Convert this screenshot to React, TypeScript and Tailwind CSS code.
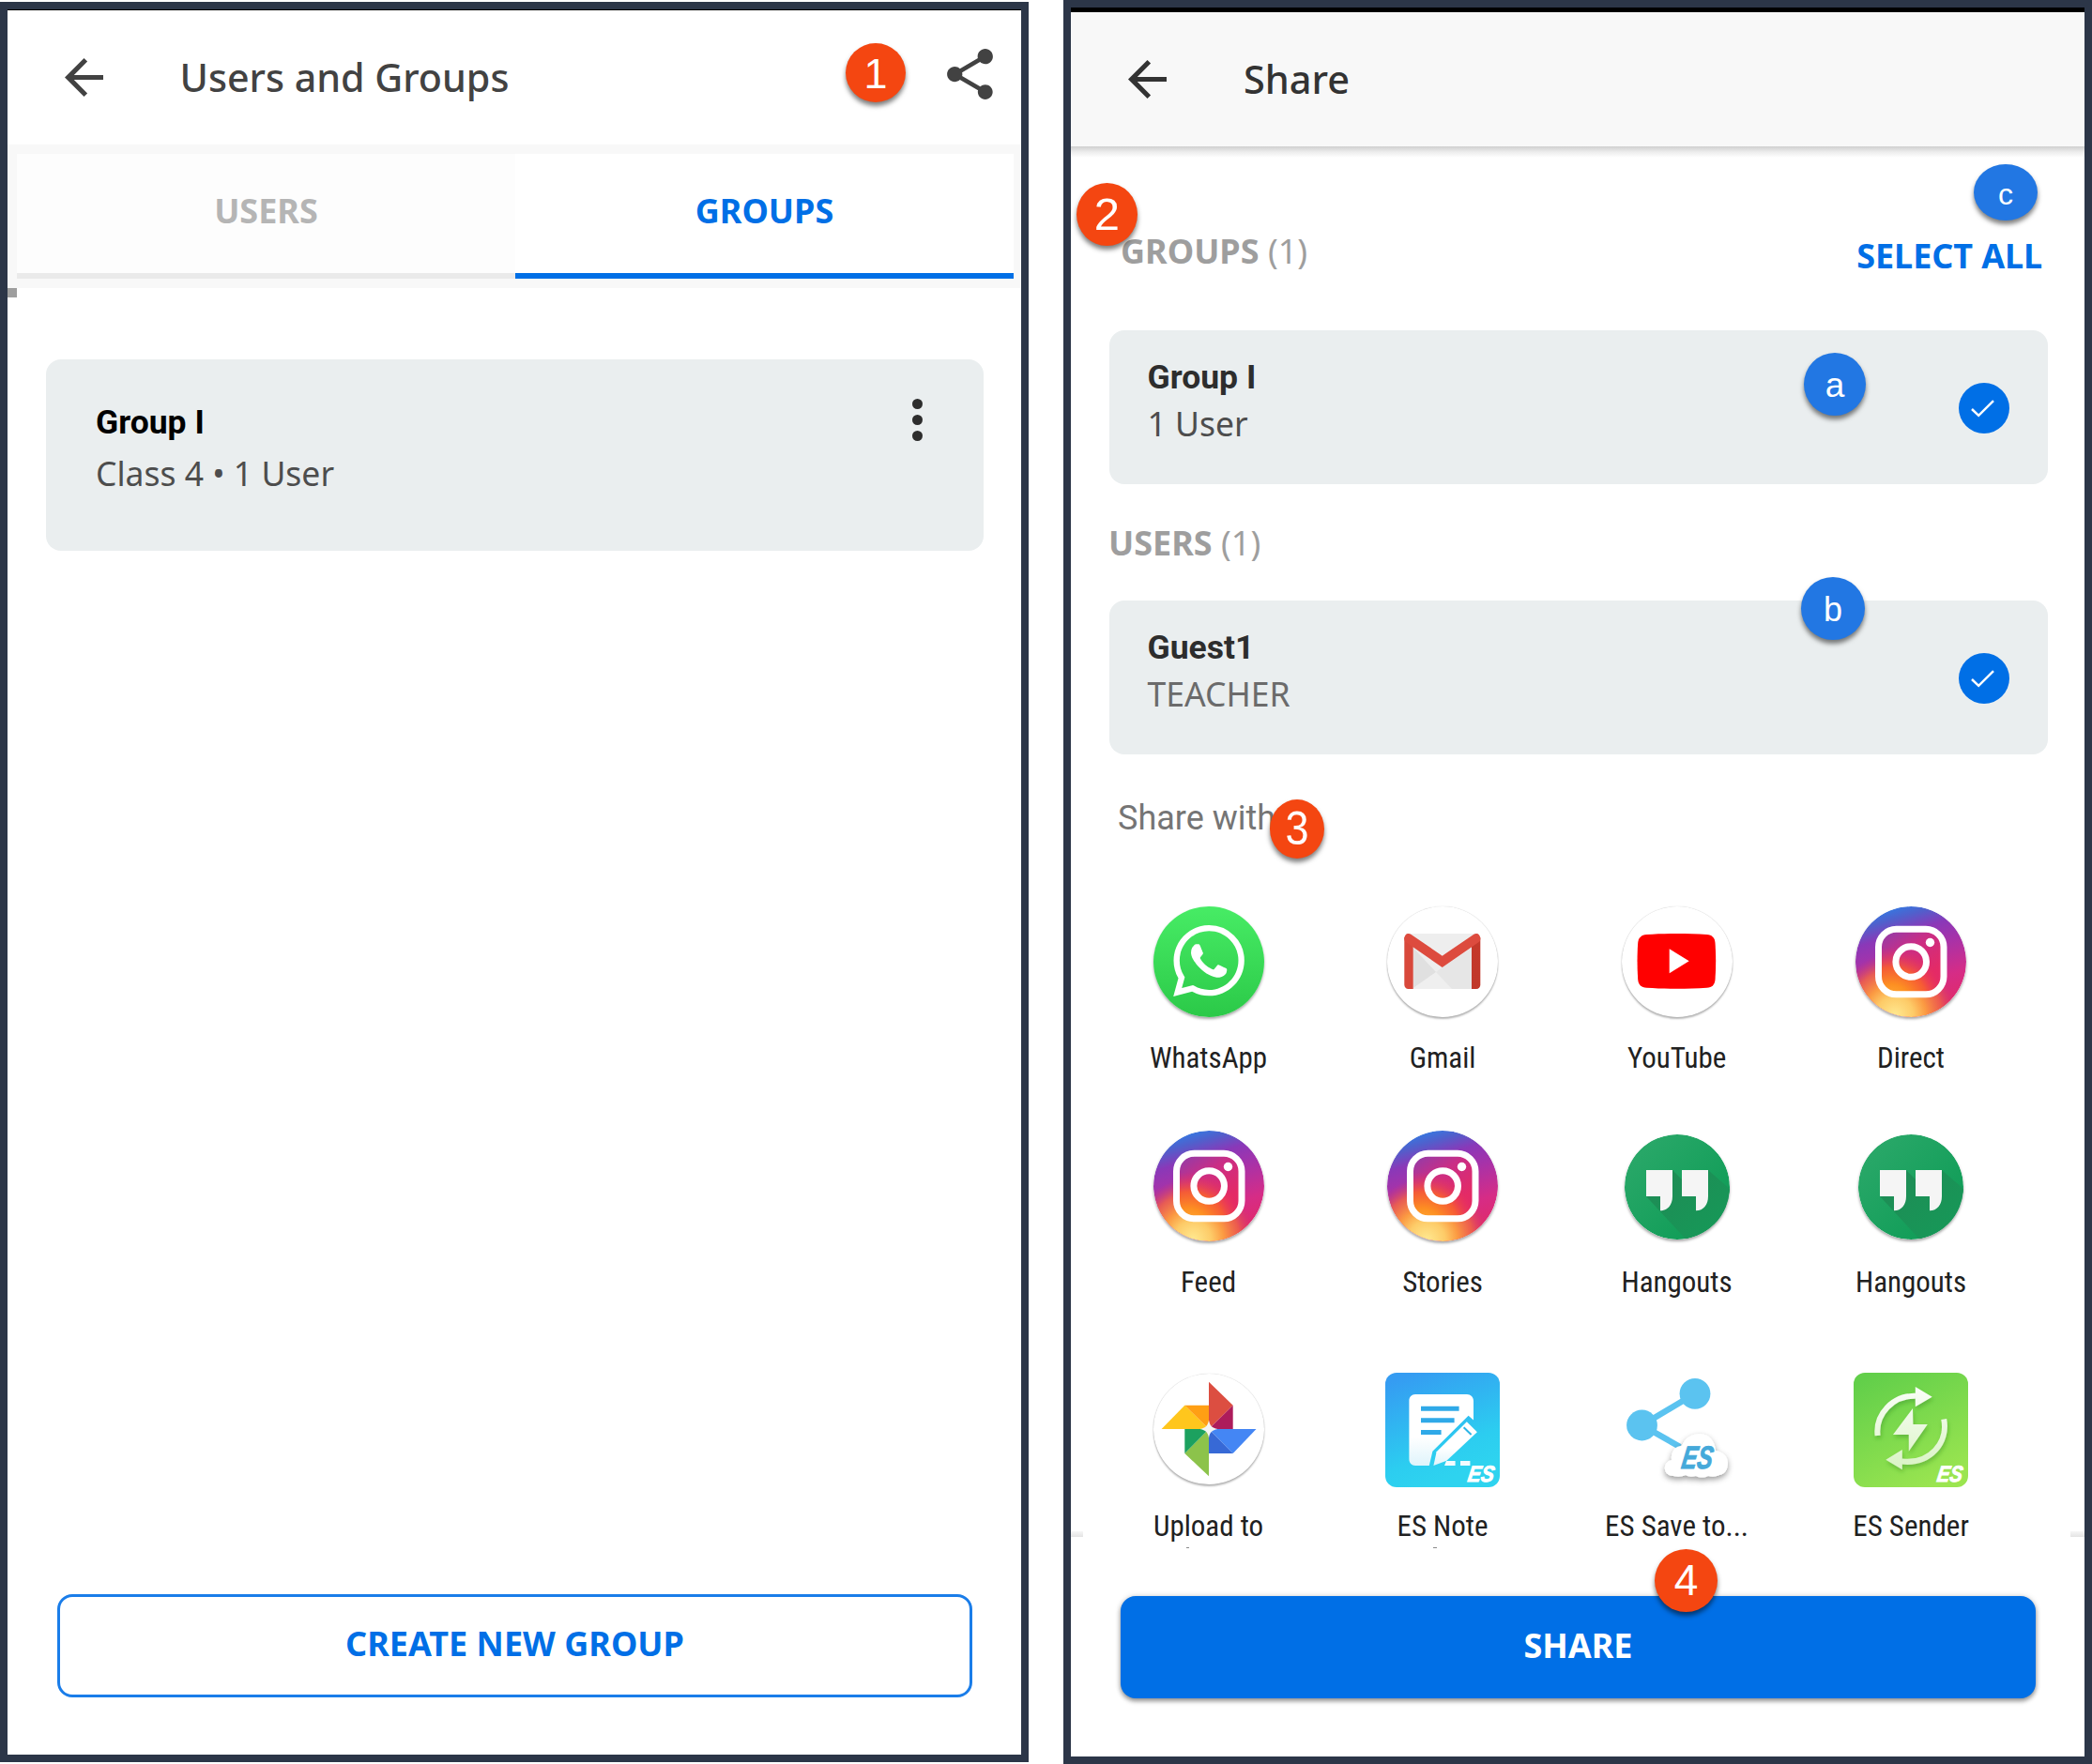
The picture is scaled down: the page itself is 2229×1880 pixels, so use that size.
import React from "react";
import { SiWhatsapp } from "react-icons/si";

const NOTO = "font-['Noto_Sans',sans-serif]";
const ROBOTO = "font-['Roboto',sans-serif]";

function BackArrow() {
  return (
    <svg className="h-[41px] w-[41px] shrink-0" viewBox="4 4 16 16" fill="currentColor">
      <path d="M20 11H7.83l5.59-5.59L12 4l-8 8 8 8 1.41-1.41L7.83 13H20v-2z" />
    </svg>
  );
}

function ShareIcon() {
  return (
    <svg className="h-[54px] w-[49px] shrink-0" viewBox="3 2 18 19.92" fill="currentColor">
      <path d="M18 16.08c-.76 0-1.44.3-1.96.77L8.91 12.7c.05-.23.09-.46.09-.7s-.04-.47-.09-.7l7.05-4.11c.54.5 1.25.81 2.04.81 1.66 0 3-1.34 3-3s-1.34-3-3-3-3 1.34-3 3c0 .24.04.47.09.7L8.04 9.81C7.5 9.31 6.79 9 6 9c-1.66 0-3 1.34-3 3s1.34 3 3 3c.79 0 1.5-.31 2.04-.81l7.12 4.16c-.05.21-.08.43-.08.65 0 1.61 1.31 2.92 2.92 2.92s2.92-1.31 2.92-2.92-1.31-2.92-2.92-2.92z" />
    </svg>
  );
}

function Badge({ className, children }: { className: string; children: React.ReactNode }) {
  return (
    <div
      className={`absolute z-10 flex items-center justify-center rounded-[50%] font-['Liberation_Sans',sans-serif] text-white shadow-[0_4px_5px_rgba(0,0,0,0.5)] ${className}`}
    >
      {children}
    </div>
  );
}

function CheckMark() {
  return (
    <svg className="mt-[2px] h-[54px] w-[54px]" viewBox="0 0 54 54">
      <circle cx="27" cy="27" r="27" fill="#006fe6" />
      <path d="M14 28l7.2 6.8L37 19.2" fill="none" stroke="#fff" strokeWidth="2.5" />
    </svg>
  );
}

const DISC = "h-[118px] w-[118px] rounded-full shadow-[0_2px_3px_rgba(0,0,0,0.35)]";
const WHITE_DISC = "h-[118px] w-[118px] rounded-full bg-white shadow-[0_2px_2px_rgba(0,0,0,0.28),0_0_1px_rgba(0,0,0,0.25)]";

function WhatsAppIcon() {
  return (
    <div className={`${DISC} flex items-center justify-center bg-linear-to-b from-[#47ec65] to-[#2bc948]`}>
      <SiWhatsapp className="mb-[2px] h-[76px] w-[76px] text-white" />
    </div>
  );
}

function GmailIcon() {
  return (
    <svg className={WHITE_DISC} viewBox="0 0 118 118">
      <defs>
        <linearGradient id="gm-r" x1="0" y1="0" x2="0" y2="1">
          <stop offset="0" stopColor="#c5392b" />
          <stop offset="1" stopColor="#c0382a" />
        </linearGradient>
      </defs>
      <rect x="20" y="29" width="77" height="59" fill="#eeeeee" />
      <path d="M27.7 44L69 88H27.7z" fill="#e0e0e0" />
      <path d="M27.7 88L52 70l6.7-5L90 44v44z" fill="#e6e6e6" />
      <path d="M27.7 87L52 70l17 18H27.7z" fill="#efefef" />
      <path d="M18.3 33h9.4v55h-5a4.4 4.4 0 0 1-4.4-4.4z" fill="#d8483b" />
      <path d="M99.3 33H90v55h5a4.3 4.3 0 0 0 4.3-4.4z" fill="url(#gm-r)" />
      <path d="M18.3 34.5c0-5 4-7 7.3-4.6L58.7 52.7 92 29.9c3.4-2.4 7.3-.4 7.3 4.6 0 2-.8 3-2.3 4L58.7 65 20.6 38.5c-1.5-1-2.3-2-2.3-4z" fill="#dd4b3e" />
    </svg>
  );
}

function YouTubeIcon() {
  return (
    <svg className={WHITE_DISC} viewBox="0 0 118 118">
      <path d="M26.500 30c20-1.400 44-1.400 64 0 6 .5 8.500 3.500 9 9 .9 13 .9 26 0 39-.5 5.500-3 8.300-9 8.800-20 1.300-44 1.300-64 0-6-.5-8.800-3.300-9.300-8.800-.9-13-.9-26 0-39 .5-5.500 3.300-8.500 9.300-9z" fill="#ff0000" />
      <path d="M50.700 45.300l21 13-21 13z" fill="#fff" />
    </svg>
  );
}

function InstagramIcon({ id }: { id: string }) {
  return (
    <svg className={DISC} viewBox="0 0 118 118">
      <defs>
        <linearGradient id={`${id}-a`} x1="0.36" y1="0" x2="0.66" y2="1">
          <stop offset="0" stopColor="#3479e2" />
          <stop offset="0.1" stopColor="#5060cc" />
          <stop offset="0.24" stopColor="#8a38b8" />
          <stop offset="0.42" stopColor="#a832a8" />
          <stop offset="0.7" stopColor="#d62c86" />
          <stop offset="1" stopColor="#e22a64" />
        </linearGradient>
        <radialGradient id={`${id}-b`} gradientUnits="userSpaceOnUse" cx="42" cy="116" r="66">
          <stop offset="0" stopColor="#ffe990" />
          <stop offset="0.3" stopColor="#fdcb68" />
          <stop offset="0.5" stopColor="#fb9a42" />
          <stop offset="0.75" stopColor="#ef6348" stopOpacity="0.85" />
          <stop offset="1" stopColor="#d0386c" stopOpacity="0" />
        </radialGradient>
        <linearGradient id={`${id}-c`} x1="0.1" y1="0" x2="0.6" y2="0.8">
          <stop offset="0" stopColor="#8d3dac" />
          <stop offset="0.45" stopColor="#c92e86" />
          <stop offset="1" stopColor="#e42a66" />
        </linearGradient>
        <radialGradient id={`${id}-d`} gradientUnits="userSpaceOnUse" cx="38" cy="104" r="60">
          <stop offset="0" stopColor="#ffb63e" />
          <stop offset="0.35" stopColor="#fd8f22" />
          <stop offset="0.65" stopColor="#f8602f" stopOpacity="0.9" />
          <stop offset="1" stopColor="#e42a66" stopOpacity="0" />
        </radialGradient>
      </defs>
      <circle cx="59" cy="59" r="59" fill={`url(#${id}-a)`} />
      <circle cx="59" cy="59" r="59" fill={`url(#${id}-b)`} />
      <rect x="24.5" y="24.3" width="69.5" height="69.5" rx="19" fill={`url(#${id}-c)`} />
      <rect x="24.5" y="24.3" width="69.5" height="69.5" rx="19" fill={`url(#${id}-d)`} stroke="#fff" strokeWidth="7" />
      <circle cx="59.2" cy="59" r="16.3" fill="none" stroke="#fff" strokeWidth="7" />
      <circle cx="79.5" cy="38.5" r="4.7" fill="#fff" />
    </svg>
  );
}

function HangoutsIcon({ id }: { id: string }) {
  return (
    <svg className="mt-[2px] h-[112px] w-[112px] rounded-full shadow-[0_2px_3px_rgba(0,0,0,0.35)]" viewBox="3 3 112 112">
      <defs>
        <linearGradient id={`${id}-a`} x1="0.1" y1="0.1" x2="0.8" y2="0.8">
          <stop offset="0" stopColor="#2aa869" />
          <stop offset="1" stopColor="#119d58" />
        </linearGradient>
        <linearGradient id={`${id}-b`} x1="0" y1="0" x2="1" y2="1">
          <stop offset="0" stopColor="#208a55" />
          <stop offset="1" stopColor="#159a58" />
        </linearGradient>
      </defs>
      <circle cx="59" cy="59" r="56" fill={`url(#${id}-a)`} />
      <path d="M26 69l42 45.5C98 108 116 88 115 61L92 41v28l-28-1V51L54 41v28z" fill={`url(#${id}-b)`} />
      <path d="M26 41h28v28c0 9-5 15.3-13 15.3V69H26zM64 41h28v28c0 9-5 15.3-13 15.3V69H64z" fill="#f5f5f5" />
    </svg>
  );
}

function PhotosIcon() {
  return (
    <svg className={`${WHITE_DISC} mb-[2px]`} viewBox="0 0 118 118">
      <path d="M59 8.7l25.7 25L59 59z" fill="#dc4e41" />
      <path d="M84.7 33.7V59H59z" fill="#ad1c5b" />
      <path d="M59 59h50.5L84.7 85z" fill="#4486f4" />
      <path d="M59 59l25.7 26H59z" fill="#3769d6" />
      <path d="M59 109.3L33.3 85 59 59z" fill="#8cc34b" />
      <path d="M33.3 59H59L33.3 85z" fill="#1ca15f" />
      <path d="M8.6 59l24.7-25.3L59 59z" fill="#ffc61d" />
      <path d="M33.3 33.7H59V59z" fill="#ff9f14" />
      <path d="M59 49.5c1.2 6 3 8 9.500 9.500-6.500 1.500-8.300 3.500-9.500 9.500-1.200-6-3-8-9.500-9.500 6.500-1.500 8.300-3.500 9.500-9.500z" fill="#f4f4f4" />
    </svg>
  );
}

function EsMark({ x, y, size, width, fill }: { x: number; y: number; size: number; width: number; fill: string }) {
  return (
    <g transform={`translate(${x} ${y}) skewX(-9)`}>
      <text
        textLength={width}
        lengthAdjust="spacingAndGlyphs"
        fill={fill}
        stroke={fill}
        strokeWidth="0.9"
        className="font-['Liberation_Sans',sans-serif] font-bold italic"
        fontSize={size}
      >
        ES
      </text>
    </g>
  );
}

function EsNoteIcon() {
  return (
    <svg className="h-[122px] w-[122px] rounded-xl" viewBox="0 0 122 122">
      <defs>
        <linearGradient id="note-a" x1="0.25" y1="0" x2="0.6" y2="0.9">
          <stop offset="0" stopColor="#359cf2" />
          <stop offset="0.75" stopColor="#2ccdf0" />
          <stop offset="1" stopColor="#2ed3ef" />
        </linearGradient>
        <linearGradient id="note-b" x1="0" y1="0" x2="0" y2="1">
          <stop offset="0.6" stopColor="#fff" />
          <stop offset="1" stopColor="#dff4fb" />
        </linearGradient>
      </defs>
      <rect width="122" height="122" fill="url(#note-a)" />
      <path d="M32 23h55c4 0 7 3 7 7v20.5l-5.4-4.8L50.4 83.7 46.8 99H32c-4 0-6.6-3-6.6-7V30c0-4 2.6-7 6.6-7z" fill="url(#note-b)" />
      <path d="M38 35.7h40.6v5H38zM38 48.3h35.6v5H38zM38 61h21.6v5H38z" fill="#2fa9e8" />
      <path d="M51.4 99l3.2-14.7 32.2-32 11.1 10.9-32.5 30.5z" fill="url(#note-b)" />
      <path d="M83.6 58.3l8 7.7" stroke="#2bb4e6" strokeWidth="2" />
      <path d="M65 94h9.6v5H63zM80 94h10.4v5H80z" fill="#f2fbfe" />
      <EsMark x={87} y={115.5} size={24} width={28} fill="#fff" />
    </svg>
  );
}

function EsSaveIcon() {
  return (
    <svg className="h-[122px] w-[122px]" viewBox="0 0 122 122">
      <defs>
        <filter id="save-s" x="-20%" y="-20%" width="140%" height="150%">
          <feDropShadow dx="0" dy="3" stdDeviation="3" floodColor="#000" floodOpacity="0.4" />
        </filter>
      </defs>
      <path d="M80 22.3L23.5 56 64 79" fill="none" stroke="#5bc3f0" strokeWidth="6.5" />
      <circle cx="80" cy="22.3" r="16.4" fill="#5bc3f0" />
      <circle cx="23.5" cy="56" r="16.4" fill="#5bc3f0" />
      <path
        d="M57 110c-7 0-10-5-9-10 1-4 3-6 7-7-1-9 4-15 11-15 3-8 10-13 20-13 10 1 15 8 16 18 7 1 13 6 13 13 0 7-3 12-9 13-4 2-8 2-12 1-4 2-9 2-13 0-4 1-8 1-11-1-4 2-9 2-13 1z"
        fill="#fff"
        filter="url(#save-s)"
      />
      <EsMark x={64.5} y={101.5} size={34} width={33} fill="#45a9da" />
    </svg>
  );
}

function EsSenderIcon() {
  return (
    <svg className="h-[122px] w-[122px] rounded-xl" viewBox="0 0 122 122">
      <defs>
        <linearGradient id="send-a" x1="0.2" y1="0" x2="0.7" y2="1">
          <stop offset="0" stopColor="#62cf4a" />
          <stop offset="1" stopColor="#9be550" />
        </linearGradient>
        <linearGradient id="send-b" gradientUnits="userSpaceOnUse" x1="0" y1="15" x2="0" y2="104">
          <stop offset="0" stopColor="#fafef8" />
          <stop offset="1" stopColor="#d9f3c4" />
        </linearGradient>
        <filter id="send-s" x="-20%" y="-20%" width="140%" height="140%">
          <feDropShadow dx="1" dy="3" stdDeviation="2" floodColor="#2c7a1c" floodOpacity="0.35" />
        </filter>
      </defs>
      <rect width="122" height="122" fill="url(#send-a)" />
      <g filter="url(#send-s)">
        <path d="M25.6 67C23 44 42 24 66 24.8M96.2 49.5C101 74 82 98 51 94.5" fill="none" stroke="url(#send-b)" strokeWidth="6" />
        <path d="M65.8 15l17.9 10.7-17.9 10.6zM51.8 82v21.3L34.3 92.7zM63 38L42 66h16.8v17.7L78.8 55H63.4z" fill="url(#send-b)" />
      </g>
      <EsMark x={88} y={115.5} size={24} width={27} fill="#fff" />
    </svg>
  );
}

const APP_ROWS: { className: string; apps: { label: string; icon: React.ReactNode }[] }[] = [
  {
    className: "mt-[72px]",
    apps: [
      { label: "WhatsApp", icon: <WhatsAppIcon /> },
      { label: "Gmail", icon: <GmailIcon /> },
      { label: "YouTube", icon: <YouTubeIcon /> },
      { label: "Direct", icon: <InstagramIcon id="direct" /> },
    ],
  },
  {
    className: "mt-[57px]",
    apps: [
      { label: "Feed", icon: <InstagramIcon id="feed" /> },
      { label: "Stories", icon: <InstagramIcon id="stories" /> },
      { label: "Hangouts", icon: <HangoutsIcon id="hang1" /> },
      { label: "Hangouts", icon: <HangoutsIcon id="hang2" /> },
    ],
  },
  {
    className: "mt-[78px]",
    apps: [
      { label: "Upload to", icon: <PhotosIcon /> },
      { label: "ES Note", icon: <EsNoteIcon /> },
      { label: "ES Save to...", icon: <EsSaveIcon /> },
      { label: "ES Sender", icon: <EsSenderIcon /> },
    ],
  },
];

function SelectCard({ title, subtitle, subtitleClass }: { title: string; subtitle: string; subtitleClass: string }) {
  return (
    <div className="mr-[39px] ml-[41px] flex h-[163.5px] shrink-0 items-center justify-between rounded-2xl bg-[#eaeeef] pr-[41px] pl-[40.5px]">
      <div className="flex h-full flex-col pt-[30px]">
        <div className={`${ROBOTO} text-[35.5px] leading-[40px] font-bold text-[#2d2d2d]`}>{title}</div>
        <div className={`${NOTO} mt-[5px] text-[35.5px] leading-[48px] ${subtitleClass}`}>{subtitle}</div>
      </div>
      <CheckMark />
    </div>
  );
}

function GroupsScreen() {
  return (
    <section className="relative mt-[2px] flex h-[1876px] w-[1096px] shrink-0 flex-col border-8 border-[#2c3648] bg-white">
      <header className="flex h-[144px] shrink-0 items-center border-t border-black pr-[30px] pl-[61px] text-[#424242]">
        <BackArrow />
        <h1 className={`${NOTO} ml-[81.5px] pb-[2px] text-[41.2px] leading-[56px] font-medium`}>Users and Groups</h1>
        <div className="mb-[8px] ml-auto">
          <ShareIcon />
        </div>
      </header>
      <nav className={`${NOTO} flex h-[153px] shrink-0 bg-[#f8f8f8] py-[10px] pr-2 pl-[10px] text-4xl font-bold`}>
        <div className="flex flex-1 items-center justify-center border-b-[6px] border-[#eaeaea] bg-[#fdfdfd] pb-[5px] text-[#b5b5b5]">
          USERS
        </div>
        <div className="flex flex-1 items-center justify-center border-b-[6px] border-[#006fe6] bg-white pb-[5px] text-[#006fe6]">
          GROUPS
        </div>
      </nav>
      <div className="h-[10px] w-[10px] shrink-0 bg-[#9e9e9e]" />
      <div className="mt-[66px] mr-[40px] ml-[41px] flex h-[204px] justify-between rounded-2xl bg-[#eaeeef] pr-[65px] pl-[53px]">
        <div className="pt-[47px]">
          <div className={`${ROBOTO} text-[35.5px] leading-[40px] font-bold text-black`}>Group I</div>
          <div className={`${NOTO} mt-[10px] text-[35.5px] leading-[48px] text-[#4d4d4d]`}>Class 4 • 1 User</div>
        </div>
        <div className="flex flex-col gap-[6px] pt-[42px]">
          <span className="h-[11px] w-[11px] rounded-full bg-[#2d2d2d]" />
          <span className="h-[11px] w-[11px] rounded-full bg-[#2d2d2d]" />
          <span className="h-[11px] w-[11px] rounded-full bg-[#2d2d2d]" />
        </div>
      </div>
      <button
        className={`${NOTO} mt-auto mr-[52px] mb-[61px] ml-[53px] flex h-[110px] shrink-0 items-center justify-center rounded-2xl border-[3px] border-[#1a7de9] pb-[4px] text-4xl font-bold text-[#006fe6]`}
      >
        CREATE NEW GROUP
      </button>
      <Badge className="top-[36px] left-[893px] h-[63px] w-[64px] bg-[#f44611] pt-[2px] text-[45px]">1</Badge>
    </section>
  );
}

function ShareScreen() {
  return (
    <section className="relative ml-[37px] flex h-[1880px] w-[1096px] shrink-0 flex-col border-8 border-[#2c3648] bg-white">
      <div className="h-[5px] shrink-0 bg-black" />
      <header className="flex h-[143px] shrink-0 items-center bg-[#f8f8f8] pl-[61px] text-[#333333]">
        <BackArrow />
        <h1 className={`${NOTO} ml-[82px] pb-[2px] text-[41.5px] leading-[56px] font-medium`}>Share</h1>
      </header>
      <div className="h-3 shrink-0 bg-linear-to-b from-[#cfcfcf] via-[#ededed] to-white" />
      <div className={`${NOTO} flex h-[184px] shrink-0 justify-between pt-[75px] pr-[45px] pl-[53px] text-4xl leading-[50px]`}>
        <div className="text-[#9e9e9e]">
          <b>GROUPS</b> (1)
        </div>
        <div className="pt-[5px] font-bold text-[#006fe6]">
          <span className="tracking-[-0.1px]">SELECT ALL</span>
        </div>
      </div>
      <SelectCard title="Group I" subtitle="1 User" subtitleClass="text-[#4d4d4d]" />
      <div className={`${NOTO} mt-[38px] mb-[36.5px] pl-[40px] text-4xl leading-[50px] text-[#9e9e9e]`}>
        <b>USERS</b> (1)
      </div>
      <SelectCard title="Guest1" subtitle="TEACHER" subtitleClass="text-[#6b6b6b]" />
      <div className={`${ROBOTO} mt-[48px] pl-[50px] text-4xl leading-[40px] text-[#757575]`}>Share with</div>
      {APP_ROWS.map((row, i) => (
        <div key={i} className={`${row.className} ml-[21.8px] grid w-[998px] grid-cols-4`}>
          {row.apps.map((app, j) => (
            <div key={j} className="flex flex-col items-center">
              <div className="flex h-[122px] items-center justify-center">{app.icon}</div>
              <div className="mt-[24px] font-['Roboto_Condensed','Roboto',sans-serif] text-[31px] leading-[36px] text-[#212121]">
                {app.label}
              </div>
            </div>
          ))}
        </div>
      ))}
      <div className="absolute top-[1624px] left-0 h-[6px] w-[13px] bg-linear-to-b from-[#f6f6f6] to-[#e4e4e4]" />
      <div className="absolute top-[1624px] right-0 h-[6px] w-[15px] bg-linear-to-b from-[#f6f6f6] to-[#e4e4e4]" />
      <div className="absolute top-[1641px] left-[123px] h-px w-[3px] bg-[#8a8a8a]" />
      <div className="absolute top-[1641px] left-[386px] h-px w-[4px] bg-[#8a8a8a]" />
      <button
        className={`${NOTO} mt-auto mr-[52px] mb-[62px] ml-[53px] flex h-[109px] shrink-0 items-center justify-center rounded-2xl bg-[#006fe6] pb-[4px] text-4xl font-bold text-white shadow-[0_3px_5px_rgba(0,0,0,0.4),0_0_6px_rgba(0,0,0,0.15)]`}
      >
        SHARE
      </button>
      <Badge className="top-[187px] left-[6px] h-[67px] w-[65px] bg-[#f44611] text-[49px]">2</Badge>
      <Badge className="top-[844px] left-[212px] h-[63px] w-[58px] bg-[#f44611] text-[50px]">
        <span className="scale-x-90">3</span>
      </Badge>
      <Badge className="top-[1643px] left-[622px] h-[67px] w-[67px] bg-[#f44611] text-[46px]">4</Badge>
      <Badge className="top-[368px] left-[781px] h-[67px] w-[66px] bg-[#2277e3] pt-[2px] text-[37px]">a</Badge>
      <Badge className="top-[607px] left-[778px] h-[67px] w-[68px] bg-[#2277e3] pt-[2px] text-[36px]">b</Badge>
      <Badge className="top-[167px] left-[962px] h-[60px] w-[68px] bg-[#2277e3] pt-[3px] text-[32px]">c</Badge>
    </section>
  );
}

export default function App() {
  return (
    <main className="flex h-[1880px] w-[2229px] overflow-hidden bg-white">
      <GroupsScreen />
      <ShareScreen />
    </main>
  );
}
